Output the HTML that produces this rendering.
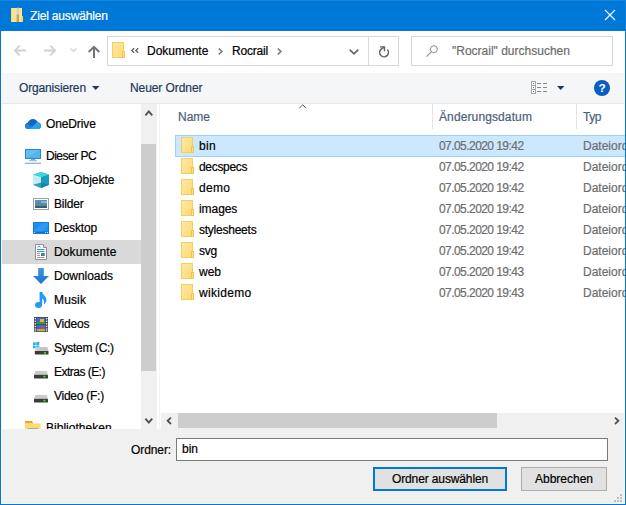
<!DOCTYPE html>
<html><head><meta charset="utf-8">
<style>
*{box-sizing:border-box;margin:0;padding:0}
html,body{width:626px;height:505px;overflow:hidden;background:#fff}
body{font-family:"Liberation Sans",sans-serif;font-size:12px;color:#000;position:relative}
.abs{position:absolute}
svg{position:absolute;overflow:visible}
.t{-webkit-text-stroke:0.2px;position:absolute;white-space:nowrap;line-height:16px;height:16px}
#win{position:absolute;left:0;top:0;width:626px;height:505px;border:1px solid #0078d7;border-top:none;background:#fff}
#title{position:absolute;left:0;top:0;width:626px;height:31px;background:#0078d7;border-top:1px solid #1a84da;border-right:1px solid #1580d9}
#toolbar{position:absolute;left:2px;top:73px;width:622px;height:31px;background:#f5f6f7;border-bottom:1px solid #e8e9ea}
#bottom{position:absolute;left:2px;top:429px;width:622px;height:74px;background:#f0f0f0}
.sel{position:absolute;left:2px;top:240px;width:139px;height:24px;background:#d9d9d9}
.row{left:199px}
.date{left:439px;color:#6d6d6d}
.typ{left:583px;color:#6d6d6d;width:42px;overflow:hidden}
.hd{color:#4c607a}
.tb{color:#1e395b}
</style></head><body>
<div id="win"></div>
<div class="abs" style="left:1px;top:31px;width:624px;height:473px;border:1px solid #fcf5ea;border-top:none"></div>
<div id="title"></div>

<!-- title icon -->
<svg style="left:11px;top:8px" width="12" height="14" viewBox="0 0 12 14">
<rect x="0" y="0" width="11" height="14" fill="#ffe48d"/>
<rect x="0" y="0" width="1" height="14" fill="#f7d56a"/>
<rect x="10.2" y="8" width="1.8" height="6" fill="#ffd456"/>
<rect x="5.6" y="0" width="2.4" height="7" fill="#d0d0d0"/>
<rect x="5.6" y="6.5" width="2.4" height="7.5" fill="#b9a66a"/>
<rect x="6.2" y="-0.6" width="1.2" height="1" fill="#c8c8c8"/>
</svg>
<div class="t" style="letter-spacing:-0.168px;left:30px;top:8px;color:#fff" id="ttl">Ziel auswählen</div>
<!-- close -->
<svg style="left:605px;top:10px" width="10" height="10" viewBox="0 0 10 10"><path d="M0 0L10 10M10 0L0 10" stroke="#fff" stroke-width="1.1" fill="none"/></svg>

<!-- nav arrows -->
<svg style="left:14px;top:45.4px" width="12" height="11" viewBox="0 0 12 11"><path d="M5.7 0.6L0.9 5.5L5.7 10.4M0.9 5.5H12" stroke="#d2d2d2" stroke-width="1.9" fill="none"/></svg>
<svg style="left:44px;top:45.4px" width="12" height="11" viewBox="0 0 12 11"><path d="M6.3 0.6L11.1 5.5L6.3 10.4M11.1 5.5H0" stroke="#d2d2d2" stroke-width="1.9" fill="none"/></svg>
<svg style="left:70px;top:48px" width="7" height="4" viewBox="0 0 7 4"><path d="M0.5 0.5L3.5 3.3L6.5 0.5" stroke="#d4d4d4" stroke-width="1.5" fill="none"/></svg>
<svg style="left:88px;top:46px" width="12" height="12" viewBox="0 0 12 12"><path d="M0.7 6L6 0.9L11.3 6M6 0.9V12" stroke="#747474" stroke-width="2" fill="none"/></svg>

<!-- address bar -->
<div class="abs" style="left:107px;top:36px;width:262px;height:30px;border:1px solid #d9d9d9;background:#fff"></div>
<div class="abs" style="left:368px;top:36px;width:31px;height:30px;border:1px solid #d9d9d9;background:#fff"></div>
<div class="abs" style="left:411px;top:36px;width:202px;height:30px;border:1px solid #d9d9d9;background:#fff"></div>
<svg style="left:112px;top:42px" width="13" height="16" viewBox="0 0 13 16"><defs><linearGradient id="ag" x1="0" y1="0" x2="1" y2="1"><stop offset="0" stop-color="#ffe9a6"/><stop offset="1" stop-color="#ffd972"/></linearGradient></defs><rect x="0.5" y="0.5" width="11" height="15" fill="url(#ag)" stroke="#f2cf63"/><rect x="10.5" y="9.5" width="2" height="6" fill="#ffdf85" stroke="#efc64f"/></svg>
<svg style="left:131px;top:48px" width="8" height="5" viewBox="0 0 8 5"><path d="M3.2 0.2L0.8 2.5L3.2 4.8M7.2 0.2L4.8 2.5L7.2 4.8" stroke="#606060" stroke-width="1.25" fill="none"/></svg>
<div class="t" style="left:147px;top:43px" id="a1">Dokumente</div>
<svg style="left:217.6px;top:48px" width="5" height="7" viewBox="0 0 5 7"><path d="M0.8 0.5L3.9 3.5L0.8 6.5" stroke="#787878" stroke-width="1.6" fill="none"/></svg>
<div class="t" style="letter-spacing:-0.178px;left:232px;top:43px" id="a2">Rocrail</div>
<svg style="left:276.7px;top:48px" width="5" height="7" viewBox="0 0 5 7"><path d="M0.8 0.5L3.9 3.5L0.8 6.5" stroke="#787878" stroke-width="1.6" fill="none"/></svg>
<svg style="left:349px;top:49px" width="10" height="6" viewBox="0 0 10 6"><path d="M0.7 0.7L5 4.8L9.3 0.7" stroke="#666" stroke-width="1.7" fill="none"/></svg>
<!-- refresh -->
<svg style="left:379px;top:45.5px" width="10" height="12" viewBox="0 0 10 12"><path d="M8.3 3.5A4.35 4.35 0 1 1 1.9 3.4L5.2 1.2" stroke="#666" stroke-width="1.6" fill="none"/><path d="M1 0.9H5.5V5.2" stroke="#666" stroke-width="1.4" fill="none"/></svg>
<!-- search -->
<svg style="left:426px;top:45px" width="12" height="12" viewBox="0 0 12 12"><circle cx="7.8" cy="4.2" r="3.5" stroke="#8a8a92" stroke-width="1" fill="none"/><path d="M5.3 6.8L0.5 11.6" stroke="#9a8a92" stroke-width="1.1"/></svg>
<div class="t" style="left:452px;top:43px;color:#6d6d6d" id="srch">"Rocrail" durchsuchen</div>

<div id="toolbar"></div>
<div class="t tb" style="letter-spacing:-0.150px;left:19px;top:80px" id="org">Organisieren</div>
<svg style="left:92px;top:86px" width="8" height="4" viewBox="0 0 8 4"><path d="M0 0H7.4L3.7 4Z" fill="#1e395b"/></svg>
<div class="t tb" style="letter-spacing:-0.081px;left:130px;top:80px" id="neu">Neuer Ordner</div>
<!-- view icon -->
<svg style="left:531px;top:81px" width="17" height="13" viewBox="0 0 17 13">
<rect x="0.5" y="0.5" width="4" height="12" fill="#fff" stroke="#a6a6a6"/>
<path d="M0.5 4.5H4.5M0.5 8.5H4.5" stroke="#a6a6a6"/>
<rect x="2" y="2" width="1" height="1" fill="#3aa03a"/><rect x="2" y="6" width="1" height="1" fill="#2a7ae0"/><rect x="2" y="10" width="1" height="1" fill="#e03030"/>
<path d="M6 2.5H10M12 2.5H16M6 6.5H10M12 6.5H16M6 10.5H10M12 10.5H16" stroke="#8a8a8a"/>
</svg>
<svg style="left:557px;top:86px" width="8" height="4" viewBox="0 0 8 4"><path d="M0 0H7.4L3.7 4Z" fill="#1e395b"/></svg>
<!-- help -->
<svg style="left:594px;top:80px" width="16" height="16" viewBox="0 0 16 16"><circle cx="8" cy="8" r="8" fill="#0a58b4"/><circle cx="8" cy="8" r="7" fill="#0b5fc4"/><text x="8" y="12.3" font-family="Liberation Sans" font-weight="bold" font-size="11.8" fill="#fff" text-anchor="middle">?</text></svg>

<!-- nav pane -->
<div class="sel"></div>
<!-- onedrive -->
<svg style="left:25px;top:118.6px" width="16" height="10" viewBox="0 0 16 10">
<path d="M3.3 10C1.2 10 0 8.6 0 6.9C0 5.2 1.2 4 2.8 3.8C3.6 1.6 5.6 0 8 0C10.2 0 12 1.3 12.8 3.2C14.6 3.4 16 4.9 16 6.7C16 8.6 14.6 10 12.8 10Z" fill="#1167bd"/>
<path d="M3.3 10C1.2 10 0 8.6 0 6.9C0 5.9 .5 5 1.2 4.5L7.4 7.4L12 3.3C14.4 3.3 16 4.9 16 6.7C16 8.6 14.6 10 12.8 10Z" fill="#1d86da"/>
<path d="M5 10L12 3.3C14.4 3.3 16 4.9 16 6.7C16 8.6 14.6 10 12.8 10Z" fill="#2c9fee"/>
</svg>
<div class="t" style="letter-spacing:-0.123px;left:46px;top:116px">OneDrive</div>
<!-- this pc -->
<svg style="left:25px;top:149px" width="16" height="16" viewBox="0 0 16 16">
<rect x="0.5" y="0.5" width="15" height="9" fill="#5fc0f5" stroke="#2e84cf"/>
<path d="M1 9L15 1V9Z" fill="#46aef0" opacity=".6"/>
<rect x="6" y="10" width="4" height="1.5" fill="#8aa6c0"/><rect x="4" y="11.2" width="8" height="1" fill="#9ab2c8"/>
<rect x="0" y="13.6" width="16" height="1.4" fill="#9fb3c6"/>
</svg>
<div class="t" style="letter-spacing:-0.488px;left:46px;top:148px">Dieser PC</div>
<!-- 3d -->
<svg style="left:33px;top:172px" width="16" height="16" viewBox="0 0 16 16">
<path d="M8 0L16 2.6V12.8L8 16L0 12.8V2.6Z" fill="#35c3d6"/>
<path d="M0 2.6L8 5V16L0 12.8Z" fill="#c4edf2"/>
<path d="M16 2.6L8 5V16L16 12.8Z" fill="#179dc0"/>
<path d="M0 12.8L8 10.5L16 12.8L8 16Z" fill="#0f7f9f" opacity=".75"/>
<path d="M0 2.6L8 0L16 2.6L8 5Z" fill="#48d0de"/>
</svg>
<div class="t" style="letter-spacing:-0.030px;left:54px;top:172px">3D-Objekte</div>
<!-- bilder -->
<svg style="left:33px;top:198px" width="16" height="12" viewBox="0 0 16 12">
<rect x="0.5" y="0.5" width="15" height="11" fill="#fff" stroke="#a0a0a0"/>
<rect x="2" y="2" width="12" height="8" fill="#4a90e0"/>
<path d="M2 6C5 4 8 5 14 5.5V10H2Z" fill="#5d8f78"/>
<path d="M2 8H14V10H2Z" fill="#2c5d8c"/>
<path d="M8 3.5H14V4.6H8Z" fill="#cfe3f7" opacity=".8"/>
</svg>
<div class="t" style="letter-spacing:-0.165px;left:54px;top:196px">Bilder</div>
<!-- desktop -->
<svg style="left:33px;top:222px" width="16" height="12" viewBox="0 0 16 12">
<rect x="0" y="0" width="16" height="12" fill="#1f8ff2"/>
<path d="M0 10L10 0H16V3L9 10Z" fill="#3aa0f6" opacity=".6"/>
<rect x="0" y="9.6" width="16" height="2.4" fill="#1570c8"/>
<rect x="1.2" y="10.2" width="1" height="1" fill="#fff"/><rect x="12.2" y="10.2" width="1" height="1" fill="#fff"/><rect x="14" y="10.2" width="1" height="1" fill="#fff"/>
<path d="M0.5 0.5H15.5V11.5H0.5Z" fill="none" stroke="#1878d8"/>
</svg>
<div class="t" style="letter-spacing:-0.147px;left:54px;top:220px">Desktop</div>
<!-- dokumente -->
<svg style="left:35px;top:244px" width="12" height="16" viewBox="0 0 12 16">
<path d="M0.5 0.5H8.5L11.5 3.5V15.5H0.5Z" fill="#fff" stroke="#8f8f8f"/>
<path d="M8.5 0.5V3.5H11.5" fill="#e8e8e8" stroke="#8f8f8f"/>
<path d="M2 5.5H9.5M2 7.5H9.5" stroke="#3a8ae8"/>
<path d="M2.5 3.5L4 1.8L5.5 3.5" stroke="#3a8ae8" fill="none" stroke-width=".9"/>
<path d="M2 9.5H5M2 11.5H5M2 13.5H9.5" stroke="#9a9a9a"/>
<rect x="6" y="9" width="3.6" height="3" fill="#3f7f5f"/><rect x="6" y="9" width="3.6" height="1.2" fill="#3a8ae8"/>
</svg>
<div class="t" style="letter-spacing:0.136px;left:54px;top:244px">Dokumente</div>
<!-- downloads -->
<svg style="left:33px;top:268px" width="16" height="16" viewBox="0 0 16 16">
<defs><linearGradient id="dg" x1="0" y1="0" x2="0" y2="1"><stop offset="0" stop-color="#3a93e6"/><stop offset="1" stop-color="#1c74cf"/></linearGradient></defs>
<path d="M5.2 0H10.8V8H16L8 16L0 8H5.2Z" fill="url(#dg)"/>
</svg>
<div class="t" style="letter-spacing:-0.031px;left:54px;top:268px">Downloads</div>
<!-- musik -->
<svg style="left:35px;top:292px" width="12" height="16" viewBox="0 0 12 16">
<ellipse cx="3.5" cy="13" rx="3.5" ry="2.9" fill="#1e9af8"/>
<path d="M4.6 13V0H7.2C7.6 2.8 11.4 4.4 11.4 8C11.4 9.9 10.5 11.3 8.8 12.4C9.5 10.4 9.2 8.6 8.2 7.4C7.8 6.9 7.5 6.7 7.2 6.5V13Z" fill="#1e9af8"/>
</svg>
<div class="t" style="letter-spacing:0.151px;left:54px;top:292px">Musik</div>
<!-- videos -->
<svg style="left:34px;top:317px" width="14" height="15" viewBox="0 0 14 15">
<rect x="0" y="0" width="14" height="15" fill="#4a4a4a"/>
<rect x="2.6" y="0.8" width="8.8" height="6.2" fill="#3a6ad8"/><rect x="2.6" y="7.8" width="8.8" height="6.4" fill="#3a6ad8"/>
<rect x="6" y="2" width="4" height="4" fill="#e8b820"/><rect x="3" y="5" width="8" height="2" fill="#3a9a3a"/>
<rect x="7" y="9" width="3" height="3" fill="#c84a4a"/><rect x="3" y="12.2" width="8" height="2" fill="#d8b030"/>
<g fill="#fff"><rect x="0.7" y="1" width="1.2" height="1.3"/><rect x="0.7" y="3.6" width="1.2" height="1.3"/><rect x="0.7" y="6.2" width="1.2" height="1.3"/><rect x="0.7" y="8.8" width="1.2" height="1.3"/><rect x="0.7" y="11.4" width="1.2" height="1.3"/><rect x="0.7" y="13.4" width="1.2" height="1"/>
<rect x="12.1" y="1" width="1.2" height="1.3"/><rect x="12.1" y="3.6" width="1.2" height="1.3"/><rect x="12.1" y="6.2" width="1.2" height="1.3"/><rect x="12.1" y="8.8" width="1.2" height="1.3"/><rect x="12.1" y="11.4" width="1.2" height="1.3"/><rect x="12.1" y="13.4" width="1.2" height="1"/></g>
</svg>
<div class="t" style="letter-spacing:-0.181px;left:54px;top:316px">Videos</div>
<!-- system c -->
<svg style="left:33px;top:342px" width="16" height="13" viewBox="0 0 16 13">
<g fill="#1eb0f0"><rect x="0" y="0.4" width="2.7" height="2.6"/><rect x="3.3" y="0" width="3" height="3"/><rect x="0" y="3.6" width="2.7" height="2.6"/><rect x="3.3" y="3.6" width="3" height="3"/></g>
<path d="M3.2 5H14.2L15.5 9H1.8Z" fill="#cfcfcf"/>
<path d="M6.4 5H14.2L15.5 9H6.4Z" fill="#c4c4c4"/>
<rect x="1.8" y="9" width="13.7" height="3.6" rx=".5" fill="#3c3c3c"/>
<rect x="11" y="10" width="2" height="1.6" fill="#3ee03e"/>
</svg>
<div class="t" style="letter-spacing:-0.322px;left:54px;top:340px">System (C:)</div>
<!-- extras -->
<svg style="left:34px;top:371px" width="14" height="8" viewBox="0 0 14 8">
<path d="M1.4 0H12.6L14 3.8H0Z" fill="#cacaca"/>
<rect x="0" y="3.8" width="14" height="3.6" rx=".5" fill="#3c3c3c"/>
<rect x="9.4" y="4.8" width="2" height="1.6" fill="#3ee03e"/>
</svg>
<div class="t" style="letter-spacing:-0.525px;left:54px;top:364px">Extras (E:)</div>
<svg style="left:34px;top:395px" width="14" height="8" viewBox="0 0 14 8">
<path d="M1.4 0H12.6L14 3.8H0Z" fill="#cacaca"/>
<rect x="0" y="3.8" width="14" height="3.6" rx=".5" fill="#3c3c3c"/>
<rect x="9.4" y="4.8" width="2" height="1.6" fill="#3ee03e"/>
</svg>
<div class="t" style="letter-spacing:-0.257px;left:54px;top:388px">Video (F:)</div>
<!-- bibliotheken -->
<svg style="left:25px;top:421px" width="16" height="9" viewBox="0 0 16 9">
<path d="M0 0H7L8.5 2.5H0Z" fill="#e8a820"/>
<rect x="0" y="2.5" width="15.6" height="7" fill="#ffd96a"/>
<rect x="3" y="7.4" width="10" height="2" fill="#4a9ae8"/>
</svg>
<div class="t" style="letter-spacing:0.026px;left:46px;top:420px">Bibliotheken</div>

<!-- nav scrollbar -->
<div class="abs" style="left:141px;top:104px;width:16px;height:325px;background:#f0f0f0"></div>
<div class="abs" style="left:141px;top:144px;width:15px;height:227px;background:#cdcdcd"></div>
<div class="abs" style="left:159px;top:104px;width:1px;height:325px;background:#f4f4f4"></div>
<svg style="left:145px;top:110px" width="8" height="6" viewBox="0 0 8 6"><path d="M0.4 5.4L3.8 1.5L7.2 5.4" stroke="#505050" stroke-width="1.9" fill="none"/></svg>
<svg style="left:145px;top:418px" width="8" height="6" viewBox="0 0 8 6"><path d="M0.4 0.6L3.8 4.5L7.2 0.6" stroke="#505050" stroke-width="1.9" fill="none"/></svg>

<!-- list header -->
<div class="t hd" style="left:178px;top:109px">Name</div>
<div class="t hd" style="letter-spacing:0.114px;left:439px;top:109px">Änderungsdatum</div>
<div class="t hd" style="letter-spacing:-0.415px;left:583px;top:109px">Typ</div>
<div class="abs" style="left:432px;top:104px;width:1px;height:25px;background:#e5e5e5"></div>
<div class="abs" style="left:576px;top:104px;width:1px;height:25px;background:#e5e5e5"></div>
<svg style="left:299px;top:104px" width="8" height="5" viewBox="0 0 8 5"><path d="M0.3 4.3L3.7 0.7L7.1 4.3" stroke="#5a5a5a" stroke-width="1" fill="none"/></svg>

<!-- selection -->
<div class="abs" style="left:175px;top:135px;width:450px;height:22px;background:#cce8ff;border:1px solid #99d1ff;border-right:none"></div>

<svg class="abs" style="left:181px;top:137px" width="13" height="16" viewBox="0 0 13 16"><defs><linearGradient id="fg0" x1="0" y1="0" x2="1" y2="1"><stop offset="0" stop-color="#ffe9a6"/><stop offset="1" stop-color="#ffd972"/></linearGradient></defs><rect x="0.5" y="0.5" width="11" height="15" fill="url(#fg0)" stroke="#f2cf63"/><rect x="10.5" y="9.5" width="2" height="6" fill="#ffdf85" stroke="#efc64f"/></svg>
<div class="t row" style="letter-spacing:0.328px;top:138px">bin</div>
<div class="t date" style="letter-spacing:-0.558px;top:138px">07.05.2020 19:42</div>
<div class="t typ" style="top:138px">Dateiordner</div>
<svg class="abs" style="left:181px;top:158px" width="13" height="16" viewBox="0 0 13 16"><defs><linearGradient id="fg1" x1="0" y1="0" x2="1" y2="1"><stop offset="0" stop-color="#ffe9a6"/><stop offset="1" stop-color="#ffd972"/></linearGradient></defs><rect x="0.5" y="0.5" width="11" height="15" fill="url(#fg1)" stroke="#f2cf63"/><rect x="10.5" y="9.5" width="2" height="6" fill="#ffdf85" stroke="#efc64f"/></svg>
<div class="t row" style="letter-spacing:-0.313px;top:159px">decspecs</div>
<div class="t date" style="letter-spacing:-0.558px;top:159px">07.05.2020 19:42</div>
<div class="t typ" style="top:159px">Dateiordner</div>
<svg class="abs" style="left:181px;top:179px" width="13" height="16" viewBox="0 0 13 16"><defs><linearGradient id="fg2" x1="0" y1="0" x2="1" y2="1"><stop offset="0" stop-color="#ffe9a6"/><stop offset="1" stop-color="#ffd972"/></linearGradient></defs><rect x="0.5" y="0.5" width="11" height="15" fill="url(#fg2)" stroke="#f2cf63"/><rect x="10.5" y="9.5" width="2" height="6" fill="#ffdf85" stroke="#efc64f"/></svg>
<div class="t row" style="letter-spacing:0.292px;top:180px">demo</div>
<div class="t date" style="letter-spacing:-0.558px;top:180px">07.05.2020 19:42</div>
<div class="t typ" style="top:180px">Dateiordner</div>
<svg class="abs" style="left:181px;top:200px" width="13" height="16" viewBox="0 0 13 16"><defs><linearGradient id="fg3" x1="0" y1="0" x2="1" y2="1"><stop offset="0" stop-color="#ffe9a6"/><stop offset="1" stop-color="#ffd972"/></linearGradient></defs><rect x="0.5" y="0.5" width="11" height="15" fill="url(#fg3)" stroke="#f2cf63"/><rect x="10.5" y="9.5" width="2" height="6" fill="#ffdf85" stroke="#efc64f"/></svg>
<div class="t row" style="letter-spacing:-0.065px;top:201px">images</div>
<div class="t date" style="letter-spacing:-0.558px;top:201px">07.05.2020 19:42</div>
<div class="t typ" style="top:201px">Dateiordner</div>
<svg class="abs" style="left:181px;top:221px" width="13" height="16" viewBox="0 0 13 16"><defs><linearGradient id="fg4" x1="0" y1="0" x2="1" y2="1"><stop offset="0" stop-color="#ffe9a6"/><stop offset="1" stop-color="#ffd972"/></linearGradient></defs><rect x="0.5" y="0.5" width="11" height="15" fill="url(#fg4)" stroke="#f2cf63"/><rect x="10.5" y="9.5" width="2" height="6" fill="#ffdf85" stroke="#efc64f"/></svg>
<div class="t row" style="letter-spacing:-0.239px;top:222px">stylesheets</div>
<div class="t date" style="letter-spacing:-0.558px;top:222px">07.05.2020 19:42</div>
<div class="t typ" style="top:222px">Dateiordner</div>
<svg class="abs" style="left:181px;top:242px" width="13" height="16" viewBox="0 0 13 16"><defs><linearGradient id="fg5" x1="0" y1="0" x2="1" y2="1"><stop offset="0" stop-color="#ffe9a6"/><stop offset="1" stop-color="#ffd972"/></linearGradient></defs><rect x="0.5" y="0.5" width="11" height="15" fill="url(#fg5)" stroke="#f2cf63"/><rect x="10.5" y="9.5" width="2" height="6" fill="#ffdf85" stroke="#efc64f"/></svg>
<div class="t row" style="letter-spacing:-0.263px;top:243px">svg</div>
<div class="t date" style="letter-spacing:-0.558px;top:243px">07.05.2020 19:42</div>
<div class="t typ" style="top:243px">Dateiordner</div>
<svg class="abs" style="left:181px;top:263px" width="13" height="16" viewBox="0 0 13 16"><defs><linearGradient id="fg6" x1="0" y1="0" x2="1" y2="1"><stop offset="0" stop-color="#ffe9a6"/><stop offset="1" stop-color="#ffd972"/></linearGradient></defs><rect x="0.5" y="0.5" width="11" height="15" fill="url(#fg6)" stroke="#f2cf63"/><rect x="10.5" y="9.5" width="2" height="6" fill="#ffdf85" stroke="#efc64f"/></svg>
<div class="t row" style="letter-spacing:-0.005px;top:264px">web</div>
<div class="t date" style="letter-spacing:-0.558px;top:264px">07.05.2020 19:43</div>
<div class="t typ" style="top:264px">Dateiordner</div>
<svg class="abs" style="left:181px;top:284px" width="13" height="16" viewBox="0 0 13 16"><defs><linearGradient id="fg7" x1="0" y1="0" x2="1" y2="1"><stop offset="0" stop-color="#ffe9a6"/><stop offset="1" stop-color="#ffd972"/></linearGradient></defs><rect x="0.5" y="0.5" width="11" height="15" fill="url(#fg7)" stroke="#f2cf63"/><rect x="10.5" y="9.5" width="2" height="6" fill="#ffdf85" stroke="#efc64f"/></svg>
<div class="t row" style="letter-spacing:0.298px;top:285px">wikidemo</div>
<div class="t date" style="letter-spacing:-0.558px;top:285px">07.05.2020 19:43</div>
<div class="t typ" style="top:285px">Dateiordner</div>


<!-- h scrollbar -->
<div class="abs" style="left:161px;top:413px;width:463px;height:16px;background:#f0f0f0"></div>
<div class="abs" style="left:178px;top:413px;width:319px;height:15px;background:#cdcdcd"></div>
<svg style="left:166px;top:417px" width="6" height="8" viewBox="0 0 6 8"><path d="M5 0.6L1.6 3.8L5 7" stroke="#505050" stroke-width="1.8" fill="none"/></svg>
<svg style="left:614px;top:417px" width="6" height="8" viewBox="0 0 6 8"><path d="M1 0.6L4.4 3.8L1 7" stroke="#505050" stroke-width="1.8" fill="none"/></svg>

<div id="bottom"></div>
<div class="t" style="letter-spacing:-0.084px;left:131px;top:442px">Ordner:</div>
<div class="abs" style="left:176px;top:438px;width:432px;height:23px;border:1px solid #7a7a7a;background:#fff"></div>
<div class="t" style="left:182px;top:440.5px">bin</div>
<div class="abs" style="left:373px;top:467px;width:134px;height:24px;border:2px solid #0078d7;background:#e1e1e1"></div>
<div class="t" style="letter-spacing:-0.123px;left:373px;width:134px;text-align:center;top:471px">Ordner auswählen</div>
<div class="abs" style="left:521px;top:467px;width:86px;height:24px;border:1px solid #adadad;background:#e1e1e1"></div>
<div class="t" style="left:521px;width:86px;text-align:center;top:471px">Abbrechen</div>
<!-- grip -->
<svg style="left:613px;top:493px" width="10" height="10" viewBox="0 0 10 10"><g fill="#bfbfbf"><rect x="7" y="1" width="2" height="2"/><rect x="4" y="4" width="2" height="2"/><rect x="7" y="4" width="2" height="2"/><rect x="1" y="7" width="2" height="2"/><rect x="4" y="7" width="2" height="2"/><rect x="7" y="7" width="2" height="2"/></g></svg>
</body></html>
